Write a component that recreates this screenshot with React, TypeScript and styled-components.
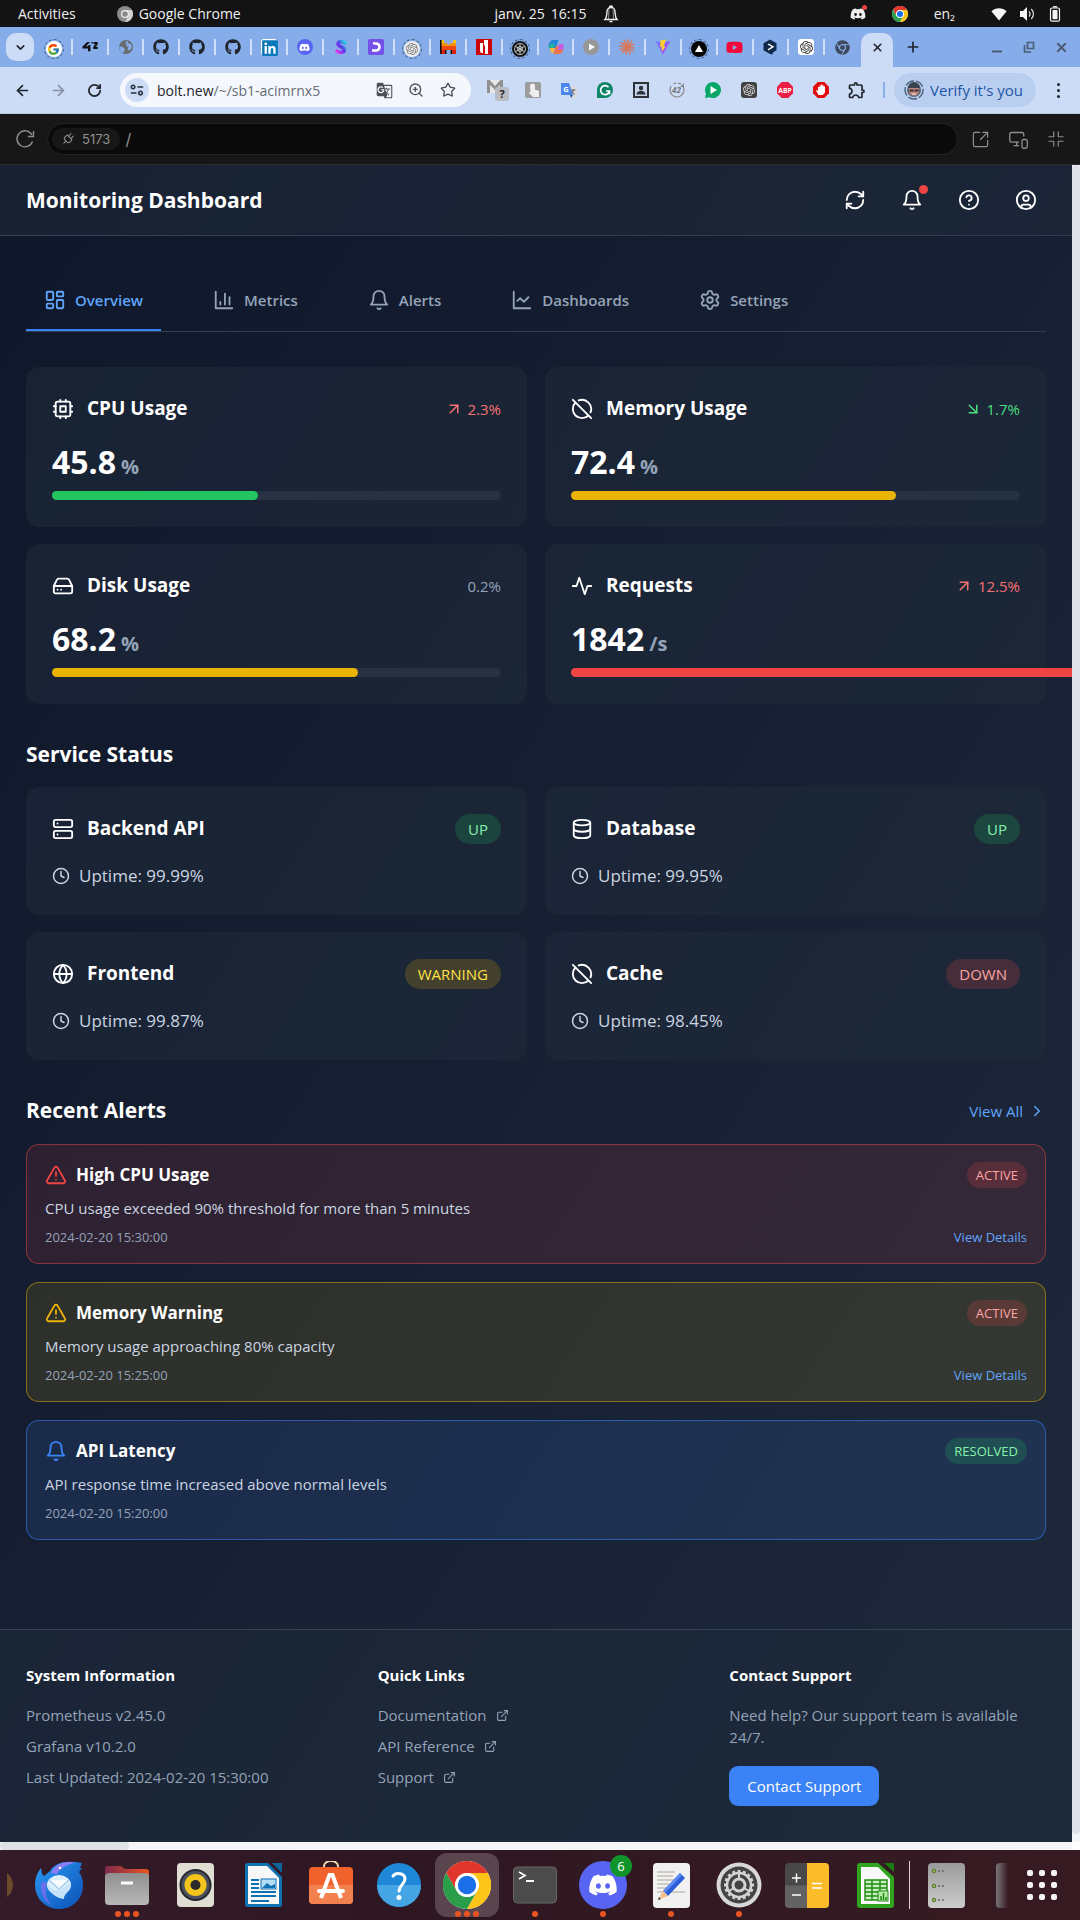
import React from "react";
import styled, { createGlobalStyle } from "styled-components";
import {
  ArrowLeft, ArrowRight, ArrowUpRight, ArrowDownRight, ChevronDown, ChevronRight, CircleHelp,
  CircleUser, Clock, Database, ExternalLink, Globe, HardDrive, LayoutDashboard, MonitorSmartphone,
  Plug, Plus, RefreshCw, RotateCw, Server, Settings, SquareArrowOutUpRight, Star, TriangleAlert, X, ZoomIn,
} from "lucide-react";
import { FcGoogle } from "react-icons/fc";
import { FaChrome, FaDiscord, FaGithub, FaLinkedin, FaYoutube } from "react-icons/fa";
import { SiOpenai } from "react-icons/si";
import { MdGTranslate, MdOutlineExtension } from "react-icons/md";

const sans = `"Open Sans", "Noto Sans", sans-serif`;

const Global = createGlobalStyle`
  *, *::before, *::after { box-sizing: border-box; }
  body { margin: 0; background: #0f172a; font-family: ${sans}; color: #fff; }
  button, input { font: inherit; color: inherit; border: 0; background: none; padding: 0; margin: 0; }
  button { cursor: pointer; }
  h1, h2, h3, p, ul { margin: 0; padding: 0; font: inherit; }
  ul { list-style: none; }
  a { color: inherit; text-decoration: none; }
  svg { display: block; flex: none; }
`;

/* ---------- drawings ---------- */

type LineProps = { size?: number; stroke?: string; children?: React.ReactNode };
const Line = ({ size = 22, stroke = "currentColor", children }: LineProps) => (
  <svg width={size} height={size} viewBox="0 0 24 24" fill="none" stroke={stroke} strokeWidth="2" strokeLinecap="round" strokeLinejoin="round" aria-hidden="true">
    {children}
  </svg>
);
const BellIcon = ({ size = 22 }: { size?: number }) => (
  <Line size={size}><path d="M6 8a6 6 0 0 1 12 0c0 7 3 9 3 9H3s3-2 3-9" /><path d="M10.3 21a1.94 1.94 0 0 0 3.4 0" /></Line>
);
const BarsIcon = () => <Line><path d="M3 3v18h18" /><path d="M18 17V9" /><path d="M13 17V5" /><path d="M8 17v-3" /></Line>;
const TrendIcon = () => <Line><path d="M3 3v18h18" /><path d="m19 9-5 5-4-4-3 3" /></Line>;
const CpuIcon = () => (
  <Line><rect x="4" y="4" width="16" height="16" rx="2" /><rect x="9" y="9" width="6" height="6" /><path d="M15 2v2M15 20v2M2 15h2M2 9h2M20 15h2M20 9h2M9 2v2M9 20v2" /></Line>
);
const MemoryIcon = () => <Line><path d="m2 2 20 20" /><path d="M8.35 2.69A10 10 0 0 1 21.3 15.65" /><path d="M19.08 19.08A10 10 0 1 1 4.92 4.92" /></Line>;
const PulseIcon = () => <Line><path d="M22 12h-4l-3 9L9 3l-3 9H2" /></Line>;

const ChromeLogo = ({ size = 16 }: { size?: number }) => (
  <svg width={size} height={size} viewBox="0 0 48 48" aria-hidden="true">
    <circle cx="24" cy="24" r="24" fill="#fff" />
    <path d="M24 12h20.8A24 24 0 0 0 3.2 12l10.4 18A12 12 0 0 1 24 12z" fill="#e0362c" />
    <path d="M3.2 12A24 24 0 0 0 24 48l10.4-18a12 12 0 0 1-20.8 0z" fill="#2b9e49" />
    <path d="M44.8 12H24a12 12 0 0 1 10.4 18L24 48A24 24 0 0 0 44.8 12z" fill="#fcc318" />
    <circle cx="24" cy="24" r="11.5" fill="#fff" />
    <circle cx="24" cy="24" r="9.2" fill="#1a6fe8" />
  </svg>
);
const GreyChrome = () => (
  <svg width="16" height="16" viewBox="0 0 48 48" aria-hidden="true">
    <circle cx="24" cy="24" r="24" fill="#8b8b8b" />
    <path d="M24 12h20.8A24 24 0 0 1 24 48l10.4-18A12 12 0 0 0 24 12z" fill="#d2d2d2" />
    <circle cx="24" cy="24" r="12" fill="#f4f4f4" /><circle cx="24" cy="24" r="8.5" fill="#888" />
  </svg>
);
const Drawing = ({ size = 16, box = 16, children }: { size?: number; box?: number; children: React.ReactNode }) => (
  <svg width={size} height={size} viewBox={`0 0 ${box} ${box}`} aria-hidden="true">{children}</svg>
);
const FortyTwo = () => <Drawing><path fill="#111" d="M5.2 3H8L4 7.2h2.4V6h2v6.2H6V9.4H.5V7.4zM9.5 3h2.2L9.5 5.3zM11.7 3h4v2.5l-2.3 2.3h2.3V10h-4.4V7.5l2.3-2.3h-1.9z" /></Drawing>;
const GreyGlobe = () => <Drawing><circle cx="8" cy="8" r="7" fill="#686b70" /><path fill="#86ace9" d="M9 1.5 7.2 4 9 5.2 7.6 7l3 .8L9.4 11l2.2.6L14 8.6 13 5l-2.4-.4zM1.4 7.2 5 8l2 2.2-1 2.4L4.4 14A7 7 0 0 1 1.4 7.2z" /></Drawing>;
const SLogo = () => (
  <Drawing><defs><linearGradient id="sg" x1="1" y1="0" x2="0" y2="1"><stop offset="0" stopColor="#27d3e8" /><stop offset=".5" stopColor="#5a35e8" /><stop offset="1" stopColor="#e63df0" /></linearGradient></defs>
    <path d="M12 4C10 2 5.5 2 5 5c0 3 6 2.5 6.5 5.5 0 3.5-5.5 3.5-7.5 1.5" fill="none" stroke="url(#sg)" strokeWidth="3.6" strokeLinecap="round" /></Drawing>
);
const DLogo = () => <Drawing><rect width="16" height="16" rx="2" fill="#7551e9" /><path d="M5 3.2h3a4.8 4.8 0 0 1 0 9.6H4v-2.6h4a2.2 2.2 0 0 0 0-4.4L5 5.6z" fill="#fff" /></Drawing>;
const MLogo = () => (
  <Drawing><path fill="#f9c510" d="M1 1h3v3h9V1h3v4H1z" /><path fill="#f79008" d="M1 4h15v3H1z" /><path fill="#ee4a10" d="M1 7h15v4H1z" /><path fill="#d9200e" d="M1 11h4v4H1zM12 11h4v4h-4z" />
    <path fill="#111" d="M0 1h1.6v14H0zM5 11h1.5v4H5zM10.5 11H12v4h-1.5z" /><path fill="#86ace9" d="M4.5 1h8v2l-4 3-4-3z" /></Drawing>
);
const RedLogo = () => <Drawing><rect width="16" height="16" fill="#c90509" /><path fill="#fff" d="M8 1h4v14H9V7L8 6zM4 4h3v10H6a2 2 0 0 1-2-2z" /></Drawing>;
const CopilotLogo = () => (
  <Drawing><path fill="#2184d8" d="M5 1h5.5L8 9H1.5C-.5 9 1 1 5 1z" /><path fill="#23b59b" d="M2 5h5l-1.5 5H2C0 10 1 6.5 2 5z" /><path fill="#f0724d" d="M11 15H5.5L8 7h6.5c2 0 .5 8-3.5 8z" /><path fill="#c45ae0" d="M11 5h3.5c1.5 0 1.2 3.5.5 5.5L9.5 11z" /><path fill="#f7b63f" d="M1.5 9H7l-1.6 5H4C2.6 14 2.5 10 1.5 9z" /></Drawing>
);
const PlayCircle = () => <Drawing><circle cx="8" cy="8" r="8" fill="#979797" /><path d="m6 4.5 6 3.5-6 3.5z" fill="#fff" /></Drawing>;
const Burst = () => <Drawing><g stroke="#d9775a" strokeWidth="1.6" strokeLinecap="round">{[0, 30, 60, 90, 120, 150].map((a) => <path key={a} d="M8 .8v14.4" transform={`rotate(${a + 8} 8 8)`} />)}</g></Drawing>;
const ViteLogo = () => (
  <Drawing><defs><linearGradient id="vg" x1="0" y1="0" x2="1" y2="1"><stop offset="0" stopColor="#6a7cff" /><stop offset="1" stopColor="#b33ffb" /></linearGradient></defs>
    <path d="M.5 2 8 15.5 15.5 2 8 3.4z" fill="url(#vg)" /><path d="M11 .5 5.5 1.6 5 7.8l1.8-.4-.5 2.8 1.2-.3-.8 3.6 4-6.3-2 .4z" fill="#ffce2b" /></Drawing>
);
const HexLogo = () => <Drawing><path d="m8 .5 6.5 3.8v7L11 13.5l-.5 2L8 15l-6.5-3.7v-7z" fill="#10294a" /><path d="m6 5 5 2.8-5 3" fill="none" stroke="#fff" strokeWidth="1.4" /></Drawing>;
const WheelLogo = () => <Drawing><circle cx="8" cy="8" r="8" fill="#151515" /><g stroke="#ddd" fill="none" strokeWidth=".8"><circle cx="8" cy="8" r="5.5" /><circle cx="8" cy="8" r="2.5" />{[0, 60, 120].map((a) => <path key={a} d="M8 2.5v11" transform={`rotate(${a} 8 8)`} />)}</g></Drawing>;
const TriangleLogo = () => <Drawing><circle cx="8" cy="8" r="8" fill="#050505" /><path d="m8 4 4 7H4z" fill="#fff" /></Drawing>;

const GmailExt = () => (
  <svg width="24" height="22" viewBox="0 0 24 22" aria-hidden="true"><rect x="2" y="1" width="16" height="13" fill="#e8e8e8" /><path d="M2 14V1h2.6L10 7l5.4-6H18v13h-3V6l-5 5-5-5v8z" fill="#909090" /><rect x="10" y="8" width="14" height="14" rx="3" fill="#b9bcc0" /><text x="17" y="19" fontSize="11" fontWeight="700" textAnchor="middle" fill="#222">?</text></svg>
);
const HandExt = () => <Drawing><rect width="16" height="16" rx="2" fill="#9c9c9c" /><path d="M5 4a2.5 2.5 0 0 1 5 0v3.5l4 1.5v6H8l-4.5-4.5 2-.5z" fill="#eee" /></Drawing>;
const TranslateExt = () => <Drawing><path d="M5 4h10a1 1 0 0 1 1 1v10a1 1 0 0 1-1 1H9z" fill="#d9dadd" /><path d="M0 1h8l4 12H1a1 1 0 0 1-1-1z" fill="#4a86ee" /><path d="M9 13h3l-2 3z" fill="#2a56b8" /><text x="5" y="9.5" fontSize="7.5" fontWeight="700" textAnchor="middle" fill="#fff">G</text><path d="M10 8h4.5M12.2 7v1c0 2-1 3.5-2 4M11 9c.5 1.8 2 3 3 3.5" stroke="#666" fill="none" /></Drawing>;
const GrammarlyExt = () => <Drawing><path d="M8 0a8 8 0 1 1 0 16H0V8a8 8 0 0 1 8-8z" fill="#0d8566" /><path d="M11.5 5.2A4.5 4.5 0 1 0 12.5 9H9M12.5 9v3.5" fill="none" stroke="#fff" strokeWidth="1.7" /></Drawing>;
const PersonExt = () => <Drawing><rect width="16" height="16" fill="#2d3138" /><rect x="2" y="2" width="12" height="12" fill="#c4d3ea" /><circle cx="8" cy="6" r="2.2" fill="#2d3138" /><path d="M3.5 12.5c0-5 9-5 9 0z" fill="#2d3138" /></Drawing>;
const RefreshExt = () => <Drawing><circle cx="8" cy="8" r="7" fill="none" stroke="#888" strokeWidth="1.2" strokeDasharray="26 3 3 2 3 2" /><text x="7.5" y="11" fontSize="8" fontWeight="700" fontStyle="italic" textAnchor="middle" fill="#777">42</text><path d="M15 1v4h-4z" fill="#888" /></Drawing>;
const GreenPlay = () => <Drawing><path d="M8 0a8 8 0 1 1-3.5 15.2L0 16l1-4.2A8 8 0 0 1 8 0z" fill="#07a768" /><path d="m5.5 4 6.5 4-6.5 4z" fill="#fff" /></Drawing>;
const OpenAiExt = () => <Badge $bg="#424242"><SiOpenai size={12} color="#ddd" /></Badge>;
const AbpExt = () => <Drawing><path d="M4.7 0h6.6L16 4.7v6.6L11.3 16H4.7L0 11.3V4.7z" fill="#ed1e45" /><text x="8" y="10.6" fontSize="6.8" fontWeight="700" textAnchor="middle" fill="#fff">ABP</text></Drawing>;
const StopExt = () => <Drawing><path d="M4.7 0h6.6L16 4.7v6.6L11.3 16H4.7L0 11.3V4.7z" fill="#e40d0d" /><path d="M5 5v4L4 8l-1 .6L5.500 13h4.300L12 10.500v-6h-1.300V3.400H9.400V2.600H8.100v.8H6.700V5z" fill="#fff" /></Drawing>;
const Avatar = () => (
  <Drawing size={20} box={20}><circle cx="10" cy="10" r="9" fill="none" stroke="#4a607e" strokeWidth="1.4" strokeDasharray="9 2" /><circle cx="10" cy="10" r="7" fill="#596574" /><path d="M5 8h10v4c-1 5-9 5-10 0z" fill="#ba8679" /><path d="M4 8a6 6 0 0 1 12 0z" fill="#39434f" /><path d="M5.5 9.5h4v2h-4zM10.5 9.5h4v2h-4z" fill="#39303a" /><path d="M8 14h4" stroke="#eee" /></Drawing>
);
const SiteControls = () => <Drawing size={14}><g stroke="#26303e" strokeWidth="1.8" fill="none"><circle cx="3.5" cy="4.5" r="2" /><path d="M8.5 4.5H15M1 11.5h6.5" /><circle cx="12" cy="11.5" r="2" /></g></Drawing>;
const ReloadArc = () => <Drawing size={20} box={20}><path d="M17.5 12.5A8 8 0 1 1 17 6" fill="none" stroke="currentColor" strokeWidth="1.4" /><path d="M18.5 2v5.5H13" fill="none" stroke="currentColor" strokeWidth="1.4" /></Drawing>;
const CollapseIcon = () => <Line size={18}><g strokeWidth="1.6" strokeLinecap="butt"><path d="M9 2v7H2M15 2v7h7M9 22v-7H2M15 22v-7h7" /></g></Line>;

const BellTop = () => <Drawing size={18} box={18}><path d="M3 14.5h12c-2-2-1.5-4-2-8A4 4 0 0 0 9 2.5a4 4 0 0 0-4 4c-.5 4 0 6-2 8z" fill="none" stroke="#eee" strokeWidth="1.4" /><path d="M7 4.5C6.5 8 7 10 6.5 14M11 4.5c.5 3.5 0 5.5.5 9.5" stroke="#bbb" strokeWidth=".8" fill="none" /><path d="M7.5 2.5a1.5 1.5 0 0 1 3 0M7.5 16.5h3" stroke="#eee" strokeWidth="1.6" fill="none" /></Drawing>;
const WifiIcon = () => <Drawing><path d="M8 14.5.4 5.2C4.5 1.3 11.5 1.3 15.6 5.2z" fill="#f5f5f5" /></Drawing>;
const VolumeIcon = () => <Drawing><path d="M1 5h3l4-4v14l-4-4H1z" fill="#f5f5f5" /><path d="M10 5.5c1.3 1.5 1.3 3.5 0 5M12.3 3c2.6 3 2.6 7 0 10" stroke="#ddd" strokeWidth="1.2" fill="none" /></Drawing>;
const BatteryIcon = () => <Drawing><rect x="3.5" y="2" width="9" height="13.2" rx="1.5" fill="none" stroke="#f5f5f5" strokeWidth="1.2" /><rect x="5.5" y="4" width="5" height="9.2" fill="#f5f5f5" /><path d="M6 .8h4" stroke="#f5f5f5" strokeWidth="1.4" /></Drawing>;

/* ---------- desktop top bar ---------- */

const Shell = styled.div`
  display: flex;
  flex-direction: column;
  min-height: 100vh;
`;
const SystemBar = styled.header`
  display: grid;
  grid-template-columns: 1fr auto 1fr;
  align-items: center;
  height: 27px;
  padding: 0 17px 0 18px;
  background: #131313;
  color: #f0f0f0;
  font-size: 14px;
  line-height: 20px;
`;
const BarGroup = styled.div<{ $gap: number }>`
  display: flex;
  align-items: center;
  gap: ${(p) => p.$gap}px;
`;
const ClockGroup = styled(BarGroup)`
  padding-left: 34px;
`;
const TrayGroup = styled(BarGroup)`
  justify-content: flex-end;
`;
const SystemButton = styled.button`
  display: flex;
  align-items: center;
  gap: 6px;
  white-space: nowrap;
`;
const DiscordTray = styled.span`
  position: relative;
  &::after {
    content: "";
    position: absolute;
    top: -1px;
    right: -1px;
    width: 5px;
    height: 5px;
    border-radius: 50%;
    background: #ed4245;
  }
`;

/* ---------- browser ---------- */

const TabStrip = styled.div`
  display: flex;
  align-items: flex-end;
  height: 40px;
  padding: 0 3px 0 6px;
  background: #86ace9;
  color: #1f242c;
`;
const TabSearch = styled.button`
  display: grid;
  place-items: center;
  width: 28px;
  height: 28px;
  margin: 0 3px 6px 0;
  border-radius: 10px;
  background: #ccdcf6;
`;
const TabList = styled.div`
  display: flex;
  flex: 1;
  height: 40px;
  align-items: center;
`;
const BrowserTab = styled.button`
  display: grid;
  place-items: center;
  flex: 1;
  height: 16px;
  border-right: 2px solid #cfdff8;
  &:last-child { border-right-color: transparent; }
`;
const DashedRing = styled.span`
  display: grid;
  place-items: center;
  width: 20px;
  height: 20px;
  border: 1px dashed #44587a;
  border-radius: 50%;
`;
const Badge = styled.span<{ $bg: string }>`
  display: grid;
  place-items: center;
  width: 16px;
  height: 16px;
  border-radius: 3px;
  background: ${(p) => p.$bg};
`;
const RoundBadge = styled(Badge)`
  border-radius: 50%;
`;
const ActiveTab = styled.button`
  display: grid;
  place-items: center;
  width: 32px;
  height: 34px;
  padding-bottom: 6px;
  border-radius: 10px 10px 0 0;
  background: #ccdcf6;
`;
const StripButtons = styled.div`
  display: flex;
  align-items: center;
  height: 40px;
`;
const WindowButtons = styled(StripButtons)`
  margin-left: 48px;
  color: #4d5c74;
`;
const StripButton = styled.button<{ $w: number }>`
  display: grid;
  place-items: center;
  width: ${(p) => p.$w}px;
  height: 28px;
`;
const Toolbar = styled.div`
  display: flex;
  align-items: center;
  height: 47px;
  padding: 0 4px;
  background: #ccdcf6;
  border-bottom: 1px solid #b4c6e2;
  color: #1f242c;
`;
const ToolButton = styled.button<{ $faded?: boolean }>`
  display: grid;
  place-items: center;
  flex: none;
  width: 36px;
  height: 34px;
  opacity: ${(p) => (p.$faded ? 0.4 : 1)};
`;
const Omnibox = styled.div`
  display: flex;
  align-items: center;
  flex: 1;
  min-width: 0;
  height: 34px;
  margin: 0 8px;
  padding: 0 7px 0 5px;
  border-radius: 17px;
  background: #f4f7fc;
  font-size: 14px;
  color: #1f242c;
`;
const SiteChip = styled.span`
  display: grid;
  place-items: center;
  width: 24px;
  height: 24px;
  margin-right: 8px;
  border-radius: 50%;
  background: #ccdcf6;
`;
const PathInput = styled.input`
  flex: 1;
  min-width: 0;
  color: #666b73;
  outline: none;
`;
const OmniButton = styled.button`
  display: grid;
  place-items: center;
  width: 32px;
  height: 30px;
  color: #4c5158;
`;
const ToolDivider = styled.span`
  flex: none;
  width: 2px;
  height: 16px;
  margin: 0 9px 0 8px;
  background: #8ab0ea;
`;
const ProfileButton = styled.button`
  display: flex;
  flex: none;
  align-items: center;
  gap: 6px;
  height: 34px;
  padding: 0 13px 0 10px;
  border-radius: 17px;
  background: #bacfef;
  color: #2355a6;
  font-size: 15px;
  white-space: nowrap;
`;
const MenuDots = styled.button`
  display: grid;
  flex: none;
  place-content: center;
  gap: 3px;
  width: 36px;
  height: 34px;
  margin-left: 4px;
  & span { width: 3px; height: 3px; border-radius: 50%; background: #1f242c; }
`;

/* ---------- preview bar ---------- */

const PreviewBar = styled.div`
  display: flex;
  align-items: center;
  height: 51px;
  padding: 0 15px;
  background: #171717;
  border-bottom: 1px solid #2b2b2b;
  color: #8f8f8f;
`;
const PreviewUrl = styled.div`
  display: flex;
  align-items: center;
  flex: 1;
  height: 32px;
  margin: 0 13px 0 12px;
  padding: 0 4px;
  border: 1px solid #232323;
  border-radius: 16px;
  background: #0a0a0a;
`;
const PortChip = styled.span`
  display: flex;
  align-items: center;
  gap: 7px;
  height: 22px;
  margin-right: 5px;
  padding: 0 10px 0 9px;
  border-radius: 11px;
  background: #171717;
  font: 13px/22px Inter, sans-serif;
  & svg { transform: rotate(45deg); }
`;
const PreviewPath = styled.input`
  flex: 1;
  min-width: 0;
  font: 16px/22px Inter, sans-serif;
  outline: none;
`;
const PreviewActions = styled.div`
  display: flex;
  align-items: center;
  gap: 18px;
`;

/* ---------- dashboard ---------- */

const Stage = styled.div`
  display: grid;
  grid-template-columns: minmax(0, 1fr) 8px;
  grid-template-rows: 1fr 8px;
  flex: 1;
  background: #fff;
`;
const Track = styled.div`
  background: #f3f5f7;
`;
const ThumbY = styled.div`
  height: calc(100% - 8px);
  background: #dfe3e8;
  border-radius: 4px;
`;
const ThumbX = styled.div`
  width: 12%;
  height: 8px;
  background: #dfe3e8;
  border-radius: 4px;
`;
const Dashboard = styled.div`
  overflow: hidden;
  background: linear-gradient(to bottom right, #0f172a, #1e293b);
  font-size: 15px;
  line-height: 22px;
`;
const AppHeader = styled.header`
  display: flex;
  align-items: center;
  justify-content: space-between;
  height: 71px;
  padding: 0 26px;
  background: rgba(30, 41, 59, 0.6);
  border-bottom: 1px solid #2f3e50;
`;
const AppTitle = styled.h1`
  font-size: 21px;
  line-height: 31px;
  font-weight: 700;
`;
const HeaderActions = styled.div`
  display: flex;
  gap: 17px;
`;
const HeaderButton = styled.button<{ $dot?: boolean }>`
  position: relative;
  display: grid;
  place-items: center;
  width: 40px;
  height: 40px;
  ${(p) => p.$dot && `
    &::after {
      content: "";
      position: absolute;
      top: 5px;
      right: 4px;
      width: 9px;
      height: 9px;
      border-radius: 50%;
      background: #ef4444;
    }
  `}
`;
const Main = styled.main`
  display: flex;
  flex-direction: column;
  gap: 35px;
  padding: 35px 26px;
`;
const Tabs = styled.nav`
  display: flex;
  gap: 34px;
  border-bottom: 1px solid #2f3e50;
`;
const TabButton = styled.button<{ $active?: boolean }>`
  display: flex;
  align-items: center;
  gap: 9px;
  height: 60px;
  padding: 0 18px;
  border-bottom: 2px solid ${(p) => (p.$active ? "#3b82f6" : "transparent")};
  color: ${(p) => (p.$active ? "#60a5fa" : "#94a3b8")};
  font-weight: 600;
`;
const CardGrid = styled.div`
  display: grid;
  grid-template-columns: 1fr 1fr;
  gap: 17px 18px;
`;
const Card = styled.article`
  display: flex;
  flex-direction: column;
  gap: 18px;
  padding: 26px;
  border-radius: 13px;
  background: rgba(30, 41, 59, 0.6);
`;
const CardHead = styled.div`
  display: flex;
  align-items: center;
  justify-content: space-between;
  height: 31px;
`;
const CardTitle = styled.h3`
  display: flex;
  align-items: center;
  gap: 13px;
  font-size: 19px;
  line-height: 31px;
  font-weight: 700;
`;
const trendColor = { up: "#f87171", down: "#4ade80", flat: "#94a3b8" };
const Change = styled.span<{ $trend: keyof typeof trendColor }>`
  display: flex;
  align-items: center;
  gap: 5px;
  color: ${(p) => trendColor[p.$trend]};
`;
const Reading = styled.div`
  display: flex;
  flex-direction: column;
  gap: 9px;
  padding-bottom: 1px;
`;
const Value = styled.p`
  display: flex;
  align-items: baseline;
  gap: 5px;
  height: 40px;
  font-size: 32px;
  line-height: 40px;
  font-weight: 700;
`;
const Unit = styled.span`
  font-size: 20px;
  color: #94a3b8;
`;
const Meter = styled.div`
  height: 9px;
  border-radius: 5px;
  background: #263243;
`;
const MeterFill = styled.div<{ $color: string }>`
  height: 9px;
  border-radius: 5px;
  background: ${(p) => p.$color};
`;
const Section = styled.section<{ $gap: number }>`
  display: flex;
  flex-direction: column;
  gap: ${(p) => p.$gap}px;
`;
const SectionHead = styled.div`
  display: flex;
  align-items: center;
  justify-content: space-between;
  height: 31px;
`;
const SectionTitle = styled.h2`
  font-size: 21px;
  line-height: 31px;
  font-weight: 700;
`;
const tones = {
  green: ["rgba(34, 197, 94, 0.2)", "#86efac"],
  amber: ["rgba(234, 179, 8, 0.2)", "#fde047"],
  red: ["rgba(239, 68, 68, 0.2)", "#fca5a5"],
};
const Pill = styled.span<{ $tone: keyof typeof tones; $small?: boolean }>`
  padding: ${(p) => (p.$small ? "0 9px" : "0 13px")};
  border-radius: 16px;
  background: ${(p) => tones[p.$tone][0]};
  color: ${(p) => tones[p.$tone][1]};
  font-size: ${(p) => (p.$small ? 13 : 15)}px;
  line-height: ${(p) => (p.$small ? 26 : 30)}px;
`;
const Uptime = styled.p`
  display: flex;
  align-items: center;
  gap: 9px;
  font-size: 17px;
  line-height: 27px;
  color: #cbd5e1;
`;
const ViewAll = styled.a`
  display: flex;
  align-items: center;
  gap: 5px;
  color: #60a5fa;
`;
const levels = {
  critical: ["rgba(239, 68, 68, 0.12)", "rgba(239, 68, 68, 0.55)", "#ef4444"],
  warning: ["rgba(234, 179, 8, 0.12)", "rgba(234, 179, 8, 0.55)", "#eab308"],
  info: ["rgba(59, 130, 246, 0.13)", "rgba(59, 130, 246, 0.6)", "#3b82f6"],
};
const AlertCard = styled.article<{ $level: keyof typeof levels }>`
  display: flex;
  flex-direction: column;
  gap: 9px;
  padding: 17px 18px;
  border: 1px solid ${(p) => levels[p.$level][1]};
  border-radius: 13px;
  background: ${(p) => levels[p.$level][0]};
  background-clip: padding-box;
  & svg { color: ${(p) => levels[p.$level][2]}; }
`;
const AlertRow = styled.div<{ $h: number }>`
  display: flex;
  align-items: center;
  justify-content: space-between;
  height: ${(p) => p.$h}px;
`;
const AlertTitle = styled.h3`
  display: flex;
  align-items: center;
  gap: 9px;
  font-size: 17px;
  line-height: 26px;
  font-weight: 700;
`;
const AlertText = styled.p`
  color: #cbd5e1;
`;
const Stamp = styled.time`
  font-size: 13px;
  line-height: 18px;
  color: #94a3b8;
`;
const Details = styled.a`
  font-size: 13px;
  line-height: 18px;
  color: #60a5fa;
`;
const AppFooter = styled.footer`
  display: grid;
  grid-template-columns: repeat(3, 1fr);
  gap: 35px;
  margin-top: 54px;
  padding: 34px 26px 36px;
  border-top: 1px solid #334155;
  background: rgba(30, 41, 59, 0.6);
  color: #94a3b8;
`;
const FooterColumn = styled.section`
  display: flex;
  flex-direction: column;
  align-items: flex-start;
  gap: 18px;
`;
const FooterTitle = styled.h2`
  color: #fff;
  font-weight: 700;
`;
const FooterList = styled.ul`
  display: grid;
  gap: 9px;
`;
const FooterLink = styled.a`
  display: flex;
  align-items: center;
  gap: 9px;
`;
const SupportButton = styled.button`
  height: 40px;
  padding: 0 18px;
  border-radius: 9px;
  background: #3b82f6;
  color: #fff;
`;

/* ---------- dock ---------- */

const Dock = styled.footer`
  display: flex;
  align-items: center;
  height: 70px;
  background: linear-gradient(to right, #351b29, #2e1722 35%, #371b22);
`;
const DockEdge = styled.span`
  display: flex;
  justify-content: center;
  width: 25px;
`;
const DockItem = styled.button<{ $active?: boolean }>`
  position: relative;
  display: grid;
  place-items: center;
  width: 64px;
  height: 64px;
  margin: 0 2px;
  border-radius: 12px;
  background: ${(p) => (p.$active ? "#5a444e" : "none")};
`;
const Dots = styled.span`
  position: absolute;
  bottom: 0;
  left: 0;
  right: 0;
  display: flex;
  justify-content: center;
  gap: 3px;
  & i { width: 6px; height: 6px; border-radius: 50%; background: #e95420; }
`;
const Count = styled.span`
  position: absolute;
  top: 2px;
  right: 3px;
  width: 22px;
  height: 22px;
  border-radius: 50%;
  background: #11942a;
  color: #fff;
  font-size: 13px;
  line-height: 22px;
  text-align: center;
`;
const DockDivider = styled.span`
  width: 1px;
  height: 48px;
  margin-right: 2px;
  background: #d8d0d3;
`;
const DockGrid = styled.button`
  display: grid;
  grid-template-columns: repeat(3, 6px);
  gap: 6px;
  margin-left: 17px;
  & span { height: 6px; border-radius: 2px; background: #f3f3f3; }
`;

const Art = ({ children }: { children: React.ReactNode }) => <svg width="48" height="48" viewBox="0 0 48 48" aria-hidden="true">{children}</svg>;
const ThunderbirdArt = () => (
  <Art><defs><linearGradient id="tb" x1="0" y1="0" x2="1" y2="1"><stop offset="0" stopColor="#2a9bf5" /><stop offset="1" stopColor="#0b4fb5" /></linearGradient></defs>
    <path d="M6 7c1 3 0 6 3 8l6-5C20 2 30-1 47 2l-2 5h2l-3 4c3 4 4 8 4 13 0 14-10 24-24 24C13 48 4 41 1 31-1 24 0 14 6 7z" fill="url(#tb)" />
    <path d="M16 12C20 3 30-1 40 2 30 4 24 8 22 13z" fill="#8c7cf5" /><path d="M7 20c-3 10 1 20 9 24-6-8-6-14-4-22z" fill="#7a6cf0" opacity=".8" />
    <circle cx="25" cy="7" r="1.3" fill="#fff" /><ellipse cx="24" cy="24" rx="12" ry="10" fill="#dceefc" /><path d="M12 21c5 10 10 12 24 0-1 10-8 13-7 17-8-1-16-6-17-17z" fill="#c5e4fa" /><path d="m14 19 10 9 10-9" fill="#f6fbff" stroke="#9fc6ea" strokeWidth="1.2" /></Art>
);
const FilesArt = () => (
  <Art><defs><linearGradient id="fg" x1="0" x2="1"><stop offset="0" stopColor="#7f2a4d" /><stop offset="1" stopColor="#e9541f" /></linearGradient><linearGradient id="fb" x1="0" y1="0" x2="0" y2="1"><stop offset="0" stopColor="#8f8f8f" /><stop offset="1" stopColor="#b8b8b8" /></linearGradient></defs>
    <path d="M2 8a3 3 0 0 1 3-3h13l4 3h21a3 3 0 0 1 3 3v8H2z" fill="url(#fg)" /><rect x="2" y="12" width="44" height="32" rx="4" fill="url(#fb)" /><path d="M18 22h12" stroke="#fff" strokeWidth="3" /></Art>
);
const RhythmArt = () => <Art><rect x="6" y="2" width="37" height="44" rx="4" fill="#e0ddd3" /><circle cx="24.5" cy="24" r="16" fill="#25272e" /><circle cx="24.5" cy="24" r="14" fill="#4c515d" /><circle cx="24.5" cy="24" r="11" fill="#f3c51c" /><circle cx="24.5" cy="24" r="5" fill="#292929" /></Art>;
const WriterArt = () => (
  <Art><path d="M9 2h20l14 14v27a3 3 0 0 1-3 3H9a3 3 0 0 1-3-3V5a3 3 0 0 1 3-3z" fill="#1173b2" /><path d="M33 2h10v10z" fill="#0e649d" /><path d="M9 5h19l12 12v26H9z" fill="#f8f8f8" /><g stroke="#0e71b3" strokeWidth="2"><path d="M12 19h8M12 23h8M12 27h8M12 31h25M12 35h25M12 40h18" /></g><rect x="22" y="18" width="15" height="10" fill="#b5dcf5" stroke="#0e71b3" /><path d="m23 27 5-5 4 3 4-2v4z" fill="#0e71b3" /></Art>
);
const SoftwareArt = () => (
  <Art><path d="M17 9V5a7 5 0 0 1 14 0v4" fill="none" stroke="#f3d9b0" strokeWidth="2" /><rect x="2" y="6" width="44" height="37" rx="4" fill="#f0622b" /><path d="M2 24h44v15a4 4 0 0 1-4 4H6a4 4 0 0 1-4-4z" fill="#f3814f" /><path d="M12 30h24" stroke="#fff" strokeWidth="4" strokeLinecap="round" /><path d="m14 37 8.5-23h3L34 37" fill="none" stroke="#fff" strokeWidth="4" /></Art>
);
const HelpArt = () => <Art><circle cx="24" cy="24" r="22" fill="#1f87d8" /><path d="M2 24a22 22 0 0 0 44 0z" fill="#45a5e4" /><path d="M18 15c3-4 12-3 12 3 0 5-6 6-6 12" fill="none" stroke="#fff" strokeWidth="3" strokeLinecap="round" /><circle cx="24" cy="36.5" r="2.5" fill="#fff" /></Art>;
const TerminalArt = () => <Art><rect x="2.5" y="6" width="43" height="36" rx="4" fill="#4b4b4b" stroke="#686868" /><path d="m8 11 6 3.5L8 18M15 20h8" fill="none" stroke="#fff" strokeWidth="1.8" /></Art>;
const DiscordArt = () => <Art><circle cx="24" cy="24" r="24" fill="#5865f2" /><g transform="translate(9 9)"><FaDiscord size={30} color="#fff" /></g></Art>;
const EditorArt = () => (
  <Art><rect x="6" y="2" width="37" height="45" rx="4" fill="#f1f1f1" /><path d="M10 11h18M10 15h16M10 19h18M10 23h12M10 27h10M10 31h28" stroke="#c3c1b4" strokeWidth="1.7" /><path d="m33 12 5 5-17 18-5-5z" fill="#2b5fd9" /><path d="m33 12 2 2-17 18-2-2z" fill="#5d8df2" /><path d="m16 30 5 5-10 4z" fill="#f5c089" /><path d="m11 39 1-3 2 2z" fill="#333" /></Art>
);
const SettingsArt = () => (
  <Art><circle cx="24" cy="24" r="22.5" fill="#d8d8d8" /><circle cx="24" cy="24" r="18.5" fill="#444" /><circle cx="24" cy="24" r="12" fill="none" stroke="#d4d4d4" strokeWidth="2.5" />
    <g stroke="#d4d4d4" strokeWidth="3">{Array.from({ length: 16 }, (_, i) => <path key={i} d="M24 9v3" transform={`rotate(${i * 22.5} 24 24)`} />)}</g><circle cx="24" cy="24" r="6" fill="none" stroke="#d4d4d4" strokeWidth="3" /><path d="M24 18v-6M29 27l5 3M19 27l-5 3" stroke="#d4d4d4" strokeWidth="2" /></Art>
);
const CalcArt = () => <Art><rect x="2" y="2" width="44" height="45" rx="4" fill="#484848" /><path d="M2 24.5h22V47H6a4 4 0 0 1-4-4z" fill="#626262" /><path d="M24 2h18a4 4 0 0 1 4 4v37a4 4 0 0 1-4 4H24z" fill="#fcbb29" /><path d="M9 17h9M13.5 12.5v9M9 34h9M29 22.5h10M29 27h10" stroke="#fff" strokeWidth="1.5" /></Art>;
const SheetArt = () => (
  <Art><path d="M9 2h18l16 14v28a3 3 0 0 1-3 3H9a3 3 0 0 1-3-3V5a3 3 0 0 1 3-3z" fill="#2fa41f" /><path d="M33 2h10v9z" fill="#197a0f" /><path d="M10 6h17l12 12v25H10z" fill="#f8f8f8" /><path d="M14 19h22v20H14z" fill="#c8efbe" /><path d="M14 19h22v20H14zM14 23h22M14 27h22M14 31h22M14 35h22M21 19v20M29 19v20" fill="none" stroke="#208a12" strokeWidth="1.4" /><rect x="27" y="30" width="10" height="10" fill="#b6eba8" stroke="#208a12" /><path d="M30 39v-4M32.5 39v-7M35 39v-3" stroke="#208a12" strokeWidth="1.5" /></Art>
);
const DriveArt = () => (
  <Art><defs><linearGradient id="dg" x1="0" y1="0" x2="0" y2="1"><stop offset="0" stopColor="#9a9a9a" /><stop offset="1" stopColor="#cdcdcd" /></linearGradient></defs><rect x="6" y="2" width="37" height="45" rx="4" fill="url(#dg)" />
    {[10, 25, 39].map((y) => <g key={y}><circle cx="12" cy={y} r="1.8" fill="#8fbc3a" stroke="#5c6b3a" /><circle cx="17" cy={y} r="1" fill="#666" /><circle cx="21" cy={y} r="1" fill="#666" /></g>)}</Art>
);

/* ---------- data ---------- */

const favicons: [string, React.ReactNode][] = [
  ["Google", <DashedRing><RoundBadge $bg="#ffffff"><FcGoogle size={13} /></RoundBadge></DashedRing>],
  ["42", <FortyTwo />],
  ["Site", <GreyGlobe />],
  ["GitHub", <FaGithub size={16} />],
  ["GitHub 2", <FaGithub size={16} />],
  ["GitHub 3", <FaGithub size={16} />],
  ["LinkedIn", <Badge $bg="#ffffff"><FaLinkedin size={18} color="#0a78b8" /></Badge>],
  ["Discord", <RoundBadge $bg="#5865f2"><FaDiscord size={11} color="#fff" /></RoundBadge>],
  ["Stack", <SLogo />],
  ["Daily", <DLogo />],
  ["Assistant", <DashedRing><RoundBadge $bg="#eeeeee"><SiOpenai size={12} color="#777" /></RoundBadge></DashedRing>],
  ["Mistral", <MLogo />],
  ["News", <RedLogo />],
  ["Wheel", <DashedRing><WheelLogo /></DashedRing>],
  ["Copilot", <CopilotLogo />],
  ["Player", <PlayCircle />],
  ["Claude", <Burst />],
  ["Vite", <ViteLogo />],
  ["Vercel", <DashedRing><TriangleLogo /></DashedRing>],
  ["YouTube", <FaYoutube size={17} color="#f5073c" />],
  ["DeepL", <HexLogo />],
  ["ChatGPT", <Badge $bg="#ffffff"><SiOpenai size={13} color="#333" /></Badge>],
  ["Chrome", <FaChrome size={15} color="#3e4a5e" />],
];
const extensions: [string, React.ReactNode][] = [
  ["Mail", <GmailExt />], ["Gestures", <HandExt />], ["Translate", <TranslateExt />], ["Grammarly", <GrammarlyExt />],
  ["Contacts", <PersonExt />], ["42 refresh", <RefreshExt />], ["Player", <GreenPlay />], ["GPT", <OpenAiExt />],
  ["Adblock Plus", <AbpExt />], ["Blocker", <StopExt />], ["Extensions", <MdOutlineExtension size={20} />],
];
const tabs: [string, React.ReactNode][] = [
  ["Overview", <LayoutDashboard size={22} />], ["Metrics", <BarsIcon />], ["Alerts", <BellIcon />],
  ["Dashboards", <TrendIcon />], ["Settings", <Settings size={22} />],
];
type Trend = "up" | "down" | "flat";
const metrics: { name: string; icon: React.ReactNode; value: number; unit: string; change: string; trend: Trend; color: string }[] = [
  { name: "CPU Usage", icon: <CpuIcon />, value: 45.8, unit: "%", change: "2.3%", trend: "up", color: "#22c55e" },
  { name: "Memory Usage", icon: <MemoryIcon />, value: 72.4, unit: "%", change: "1.7%", trend: "down", color: "#eab308" },
  { name: "Disk Usage", icon: <HardDrive size={22} />, value: 68.2, unit: "%", change: "0.2%", trend: "flat", color: "#eab308" },
  { name: "Requests", icon: <PulseIcon />, value: 1842, unit: "/s", change: "12.5%", trend: "up", color: "#ef4444" },
];
const services: { name: string; icon: React.ReactNode; status: string; tone: keyof typeof tones; uptime: string }[] = [
  { name: "Backend API", icon: <Server size={22} />, status: "UP", tone: "green", uptime: "99.99%" },
  { name: "Database", icon: <Database size={22} />, status: "UP", tone: "green", uptime: "99.95%" },
  { name: "Frontend", icon: <Globe size={22} />, status: "WARNING", tone: "amber", uptime: "99.87%" },
  { name: "Cache", icon: <MemoryIcon />, status: "DOWN", tone: "red", uptime: "98.45%" },
];
const alerts: { title: string; text: string; time: string; level: keyof typeof levels; status: string }[] = [
  { title: "High CPU Usage", text: "CPU usage exceeded 90% threshold for more than 5 minutes", time: "2024-02-20 15:30:00", level: "critical", status: "ACTIVE" },
  { title: "Memory Warning", text: "Memory usage approaching 80% capacity", time: "2024-02-20 15:25:00", level: "warning", status: "ACTIVE" },
  { title: "API Latency", text: "API response time increased above normal levels", time: "2024-02-20 15:20:00", level: "info", status: "RESOLVED" },
];
const dock: { name: string; art: React.ReactNode; dots?: number; active?: boolean; count?: number }[] = [
  { name: "Thunderbird", art: <ThunderbirdArt /> },
  { name: "Files", art: <FilesArt />, dots: 3 },
  { name: "Rhythmbox", art: <RhythmArt /> },
  { name: "Writer", art: <WriterArt /> },
  { name: "Software", art: <SoftwareArt /> },
  { name: "Help", art: <HelpArt /> },
  { name: "Chrome", art: <ChromeLogo size={48} />, dots: 3, active: true },
  { name: "Terminal", art: <TerminalArt />, dots: 1 },
  { name: "Discord", art: <DiscordArt />, dots: 1, count: 6 },
  { name: "Text Editor", art: <EditorArt />, dots: 1 },
  { name: "System Settings", art: <SettingsArt />, dots: 1 },
  { name: "Calculator", art: <CalcArt /> },
  { name: "Calc", art: <SheetArt /> },
];

/* ---------- page ---------- */

export default function App() {
  return (
    <Shell>
      <Global />
      <SystemBar>
        <BarGroup $gap={41}>
          <SystemButton>Activities</SystemButton>
          <SystemButton><GreyChrome />Google Chrome</SystemButton>
        </BarGroup>
        <ClockGroup $gap={16}>
          <SystemButton><span>janv. 25</span><span>16:15</span></SystemButton>
          <BellTop />
        </ClockGroup>
        <TrayGroup $gap={36}>
          <BarGroup $gap={26}>
            <DiscordTray><FaDiscord size={16} color="#eee" /></DiscordTray>
            <ChromeLogo size={16} />
            <SystemButton>en₂</SystemButton>
          </BarGroup>
          <BarGroup $gap={12}><WifiIcon /><VolumeIcon /><BatteryIcon /></BarGroup>
        </TrayGroup>
      </SystemBar>

      <TabStrip>
        <TabSearch aria-label="Search tabs"><ChevronDown size={13} strokeWidth={3} /></TabSearch>
        <TabList>
          {favicons.map(([name, icon]) => <BrowserTab key={name} aria-label={name}>{icon}</BrowserTab>)}
        </TabList>
        <ActiveTab aria-label="Close tab"><X size={13} strokeWidth={3} /></ActiveTab>
        <StripButtons><StripButton $w={40} aria-label="New tab"><Plus size={16} strokeWidth={2.5} /></StripButton></StripButtons>
        <WindowButtons>
          <StripButton $w={32} aria-label="Minimize"><Drawing size={12} box={12}><path d="M1 10.5h10" stroke="currentColor" strokeWidth="2" /></Drawing></StripButton>
          <StripButton $w={32} aria-label="Restore"><Drawing size={12} box={12}><path d="M4.5 1.5h6v6h-6zM1.5 4v7H8" fill="none" stroke="currentColor" strokeWidth="1.7" /></Drawing></StripButton>
          <StripButton $w={32} aria-label="Close"><X size={15} strokeWidth={3} /></StripButton>
        </WindowButtons>
      </TabStrip>

      <Toolbar>
        <ToolButton aria-label="Back"><ArrowLeft size={17} strokeWidth={2.4} /></ToolButton>
        <ToolButton $faded aria-label="Forward"><ArrowRight size={17} strokeWidth={2.4} /></ToolButton>
        <ToolButton aria-label="Reload"><RotateCw size={15} strokeWidth={2.8} /></ToolButton>
        <Omnibox>
          <SiteChip><SiteControls /></SiteChip>
          <span>bolt.new</span>
          <PathInput aria-label="Address" defaultValue="/~/sb1-acimrnx5" />
          <OmniButton aria-label="Translate page"><MdGTranslate size={17} /></OmniButton>
          <OmniButton aria-label="Zoom"><ZoomIn size={16} /></OmniButton>
          <OmniButton aria-label="Bookmark"><Star size={16} /></OmniButton>
        </Omnibox>
        {extensions.map(([name, icon]) => <ToolButton key={name} aria-label={name}>{icon}</ToolButton>)}
        <ToolDivider />
        <ProfileButton><Avatar />Verify it's you</ProfileButton>
        <MenuDots aria-label="Menu"><span /><span /><span /></MenuDots>
      </Toolbar>

      <PreviewBar>
        <ReloadArc />
        <PreviewUrl>
          <PortChip><Plug size={14} strokeWidth={1.8} />5173</PortChip>
          <PreviewPath aria-label="Preview path" defaultValue="/" />
        </PreviewUrl>
        <PreviewActions>
          <SquareArrowOutUpRight size={19} strokeWidth={1.5} />
          <MonitorSmartphone size={21} strokeWidth={1.5} />
          <CollapseIcon />
        </PreviewActions>
      </PreviewBar>

      <Stage>
        <Dashboard>
          <AppHeader>
            <AppTitle>Monitoring Dashboard</AppTitle>
            <HeaderActions>
              <HeaderButton aria-label="Refresh"><RefreshCw size={22} /></HeaderButton>
              <HeaderButton $dot aria-label="Notifications"><BellIcon /></HeaderButton>
              <HeaderButton aria-label="Help"><CircleHelp size={22} /></HeaderButton>
              <HeaderButton aria-label="Account"><CircleUser size={22} /></HeaderButton>
            </HeaderActions>
          </AppHeader>

          <Main>
            <Tabs>
              {tabs.map(([name, icon], i) => <TabButton key={name} $active={i === 0}>{icon}{name}</TabButton>)}
            </Tabs>

            <CardGrid>
              {metrics.map((m) => (
                <Card key={m.name}>
                  <CardHead>
                    <CardTitle>{m.icon}{m.name}</CardTitle>
                    <Change $trend={m.trend}>
                      {m.trend === "up" && <ArrowUpRight size={18} />}
                      {m.trend === "down" && <ArrowDownRight size={18} />}
                      {m.change}
                    </Change>
                  </CardHead>
                  <Reading>
                    <Value>{m.value}<Unit>{m.unit}</Unit></Value>
                    <Meter role="progressbar" aria-label={m.name} aria-valuenow={m.value}>
                      <MeterFill $color={m.color} style={{ width: `${m.value}%` }} />
                    </Meter>
                  </Reading>
                </Card>
              ))}
            </CardGrid>

            <Section $gap={17}>
              <SectionHead><SectionTitle>Service Status</SectionTitle></SectionHead>
              <CardGrid>
                {services.map((s) => (
                  <Card key={s.name}>
                    <CardHead>
                      <CardTitle>{s.icon}{s.name}</CardTitle>
                      <Pill $tone={s.tone}>{s.status}</Pill>
                    </CardHead>
                    <Uptime><Clock size={18} />Uptime: {s.uptime}</Uptime>
                  </Card>
                ))}
              </CardGrid>
            </Section>

            <Section $gap={18}>
              <SectionHead>
                <SectionTitle>Recent Alerts</SectionTitle>
                <ViewAll href="#alerts">View All<ChevronRight size={18} /></ViewAll>
              </SectionHead>
              {alerts.map((a) => (
                <AlertCard key={a.title} $level={a.level}>
                  <AlertRow $h={26}>
                    <AlertTitle>{a.level === "info" ? <BellIcon /> : <TriangleAlert size={22} />}{a.title}</AlertTitle>
                    <Pill $small $tone={a.status === "ACTIVE" ? "red" : "green"}>{a.status}</Pill>
                  </AlertRow>
                  <AlertText>{a.text}</AlertText>
                  <AlertRow $h={18}>
                    <Stamp>{a.time}</Stamp>
                    {a.status === "ACTIVE" && <Details href="#details">View Details</Details>}
                  </AlertRow>
                </AlertCard>
              ))}
            </Section>
          </Main>

          <AppFooter>
            <FooterColumn>
              <FooterTitle>System Information</FooterTitle>
              <FooterList>
                <li>Prometheus v2.45.0</li>
                <li>Grafana v10.2.0</li>
                <li>Last Updated: 2024-02-20 15:30:00</li>
              </FooterList>
            </FooterColumn>
            <FooterColumn>
              <FooterTitle>Quick Links</FooterTitle>
              <FooterList>
                {["Documentation", "API Reference", "Support"].map((l) => (
                  <li key={l}><FooterLink href="#docs">{l}<ExternalLink size={13} /></FooterLink></li>
                ))}
              </FooterList>
            </FooterColumn>
            <FooterColumn>
              <FooterTitle>Contact Support</FooterTitle>
              <p>Need help? Our support team is available 24/7.</p>
              <SupportButton>Contact Support</SupportButton>
            </FooterColumn>
          </AppFooter>
        </Dashboard>
        <Track><ThumbY /></Track>
        <Track><ThumbX /></Track>
      </Stage>

      <Dock>
        <DockEdge><Drawing size={24} box={24}><path d="M6 0c8 6 8 18 0 24z" fill="#6b4a2c" /></Drawing></DockEdge>
        {dock.map((d) => (
          <DockItem key={d.name} $active={d.active} aria-label={d.name}>
            {d.art}
            {d.count && <Count>{d.count}</Count>}
            {d.dots && <Dots>{Array.from({ length: d.dots }, (_, i) => <i key={i} />)}</Dots>}
          </DockItem>
        ))}
        <DockDivider />
        <DockItem aria-label="Disk"><DriveArt /></DockItem>
        <svg width="30" height="48" viewBox="0 0 30 48" aria-hidden="true">
          <defs><linearGradient id="fade"><stop offset="0" stopColor="#777" /><stop offset="1" stopColor="#371b22" /></linearGradient></defs>
          <path d="M28 2h-8a4 4 0 0 0-4 4v37a4 4 0 0 0 4 4h8z" fill="url(#fade)" />
        </svg>
        <DockGrid aria-label="Show applications">{Array.from({ length: 9 }, (_, i) => <span key={i} />)}</DockGrid>
      </Dock>
    </Shell>
  );
}
